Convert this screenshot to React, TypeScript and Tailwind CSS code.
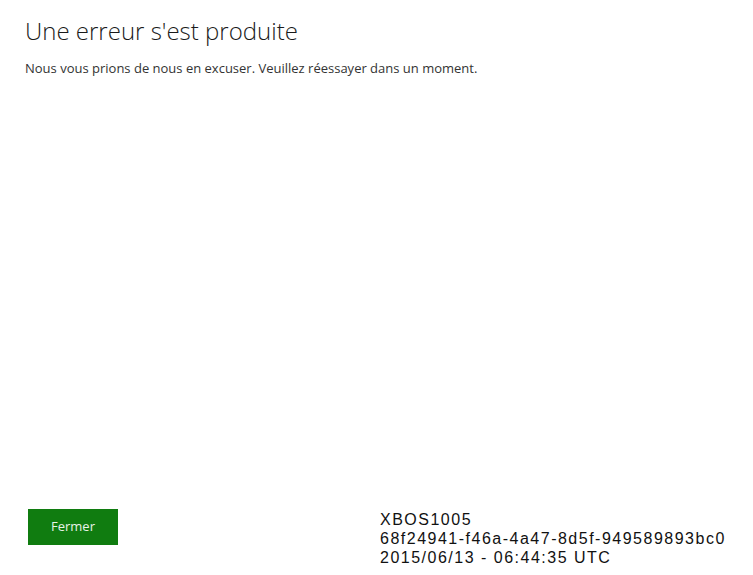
export default function App() {
  return (
    <div className="flex h-[575px] w-[753px] flex-col justify-between bg-white font-['Open_Sans',sans-serif] text-[#222]">
      <div className="pl-[25px] pt-[15px]">
        <h1 className="text-[24px] font-light leading-[32px] text-[#1a1a1a]">
          Une erreur s'est produite
        </h1>
        <p className="mt-[13px] text-[13px] leading-[16px] text-[#333]">
          Nous vous prions de nous en excuser. Veuillez réessayer dans un moment.
        </p>
      </div>

      <div className="flex items-start pb-[8px] pl-[28px]">
        <button className="mt-[-1px] h-[36px] w-[90px] bg-[#107c10] text-[13px] text-[#e8f2e8]">
          Fermer
        </button>
        <div className="ml-[262px] font-['Liberation_Sans',sans-serif] text-[16px] leading-[19px] tracking-[1.5px] text-[#111]">
          <div>XBOS1005</div>
          <div>68f24941-f46a-4a47-8d5f-949589893bc0</div>
          <div>2015/06/13 - 06:44:35 UTC</div>
        </div>
      </div>
    </div>
  );
}
